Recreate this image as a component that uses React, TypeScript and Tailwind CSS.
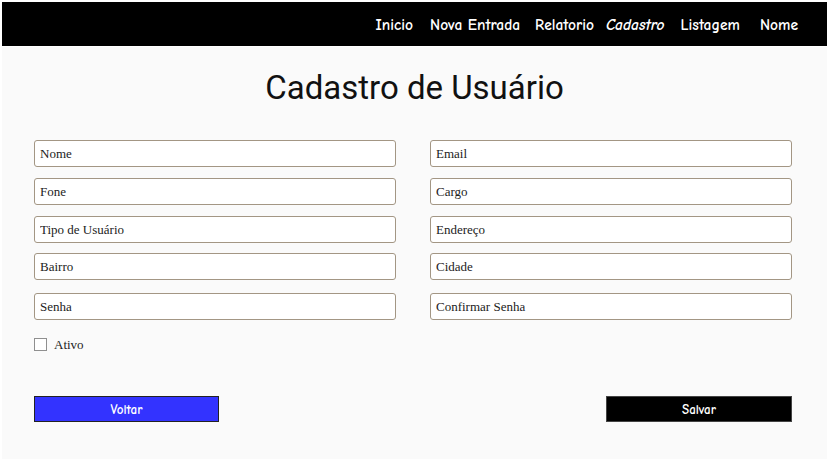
import React from "react";

const campos: [string, string][] = [
    ["Nome", "Email"],
    ["Fone", "Cargo"],
    ["Tipo de Usuário", "Endereço"],
    ["Bairro", "Cidade"],
    ["Senha", "Confirmar Senha"],
];

const menu = ["Inicio", "Nova Entrada", "Relatorio", "Cadastro", "Listagem", "Nome"];

function Campo({ placeholder }: { placeholder: string }) {
    return (
        <input
            type="text"
            placeholder={placeholder}
            className="block h-[27px] w-full rounded-[3px] border border-[#a39684] bg-white px-[5px] font-['Liberation_Serif',serif] text-[13px] text-[#222] placeholder:text-[#222] outline-none"
        />
    );
}

export default function App() {
    return (
        <div className="h-[461px] w-[829px] bg-white p-[2px]">
            <div className="flex h-full flex-col bg-[#fafafa]">
                <nav className="flex h-[44px] items-center justify-end bg-black pr-[29px] pt-[3px] font-['Comic_Sans_MS','Comic_Neue',cursive] text-[15.5px] font-bold text-white">
                    {menu.map((m, i) => (
                        <a
                            key={m}
                            href="#"
                            className={
                                i === 0 ? "ml-0" :
                                i === 1 ? "ml-[17px]" :
                                i === 2 ? "ml-[15px]" :
                                i === 3 ? "ml-[12px] italic" :
                                i === 4 ? "ml-[16px]" : "ml-[20px]"
                            }
                        >
                            {m}
                        </a>
                    ))}
                </nav>
                <div className="h-[1px] bg-white" />

                <h1 className="mt-[22px] text-center font-['Roboto',sans-serif] text-[33px] leading-[38px] text-[#111]">
                    Cadastro de Usuário
                </h1>

                <form className="pl-[32px] pr-[35px] pt-[33px]">
                    <div className="grid grid-cols-2 gap-x-[34px]">
                        {campos.map(([a, b], i) => (
                            <React.Fragment key={a}>
                                <div className={i === 4 ? "mt-[13px]" : i === 0 ? "" : i === 3 ? "mt-[10px]" : "mt-[11px]"}>
                                    <Campo placeholder={a} />
                                </div>
                                <div className={i === 4 ? "mt-[13px]" : i === 0 ? "" : i === 3 ? "mt-[10px]" : "mt-[11px]"}>
                                    <Campo placeholder={b} />
                                </div>
                            </React.Fragment>
                        ))}
                    </div>

                    <label className="mt-[15px] flex items-center gap-[7px] font-['Liberation_Serif',serif] text-[13px] text-[#222]">
                        <span className="h-[13px] w-[13px] border border-[#8f8f8f] bg-white" />
                        Ativo
                    </label>

                    <div className="mt-[41px] flex justify-between">
                        <button
                            type="button"
                            className="h-[26px] w-[185px] border border-[#222] bg-[#3333ff] pt-[2px] font-['Comic_Sans_MS','Comic_Neue',cursive] text-[13px] font-bold text-white"
                        >
                            Voltar
                        </button>
                        <button
                            type="button"
                            className="h-[26px] w-[186px] border border-[#444] bg-black pt-[2px] font-['Comic_Sans_MS','Comic_Neue',cursive] text-[13px] font-bold text-white"
                        >
                            Salvar
                        </button>
                    </div>
                </form>
            </div>
        </div>
    );
}
